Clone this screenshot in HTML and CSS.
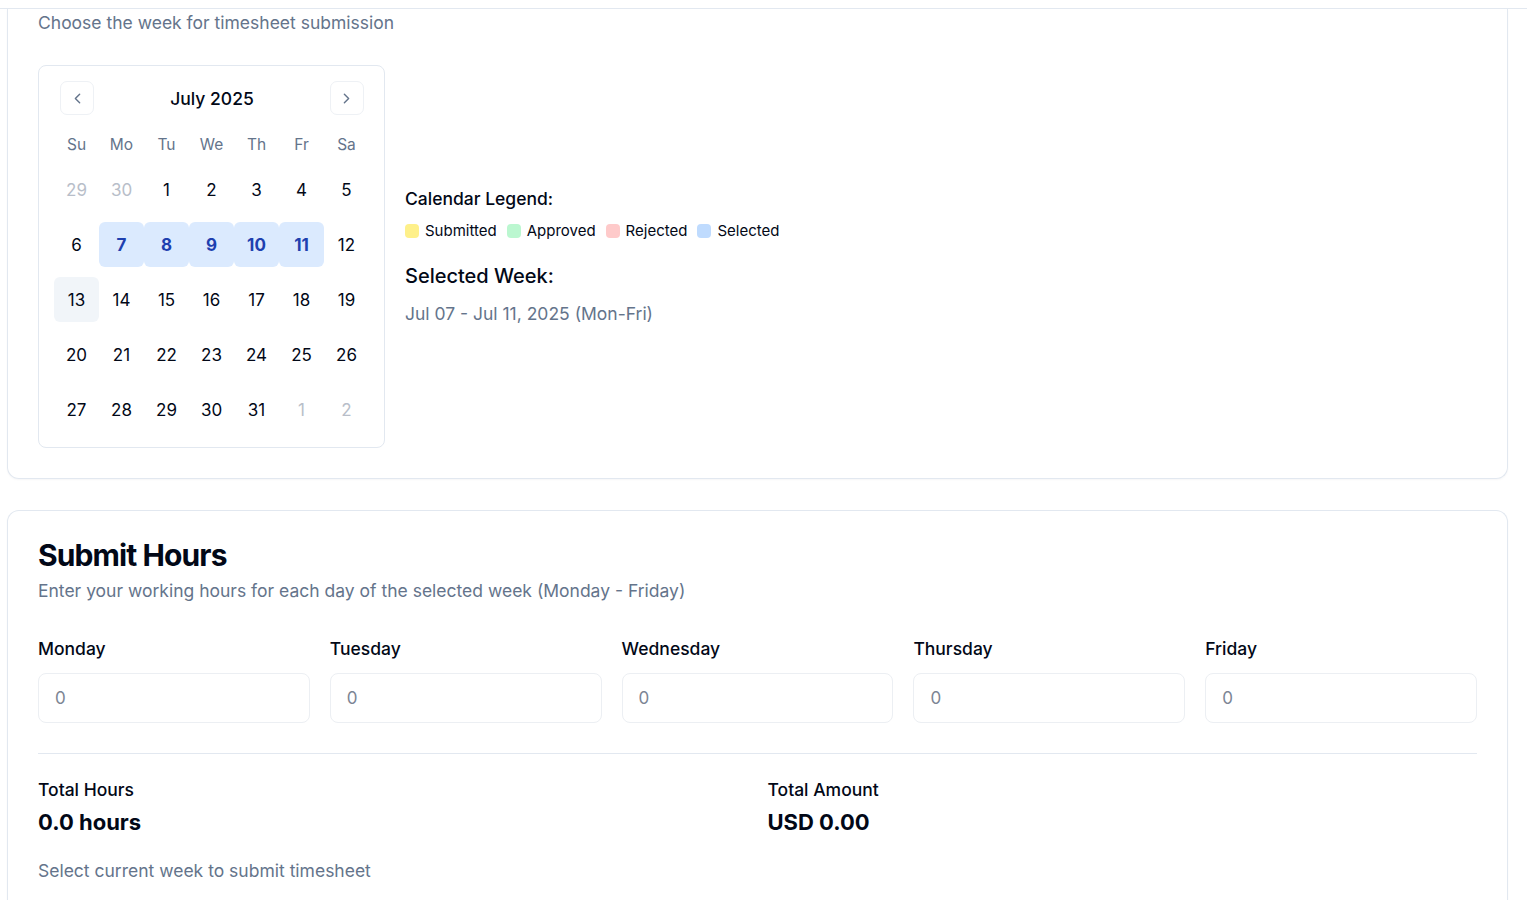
FILE: index.html
```html
<!DOCTYPE html>
<html>
<head>
<meta charset="utf-8">
<link rel="stylesheet" href="styles.css">
</head>
<body>
<div class="topbar"></div>
<main class="page">
  <section class="card card-week">
    <p class="muted lead">Choose the week for timesheet submission</p>
    <div class="week-row">
      <div class="calendar">
        <div class="cal-head">
          <button class="nav-btn" aria-label="Previous month">
            <svg width="17" height="17" viewBox="0 0 24 24" fill="none" stroke="currentColor" stroke-width="2" stroke-linecap="round" stroke-linejoin="round"><path d="m15 18-6-6 6-6"/></svg>
          </button>
          <div class="cal-title">July 2025</div>
          <button class="nav-btn" aria-label="Next month">
            <svg width="17" height="17" viewBox="0 0 24 24" fill="none" stroke="currentColor" stroke-width="2" stroke-linecap="round" stroke-linejoin="round"><path d="m9 18 6-6-6-6"/></svg>
          </button>
        </div>
        <div class="cal-weekdays">
          <span>Su</span><span>Mo</span><span>Tu</span><span>We</span><span>Th</span><span>Fr</span><span>Sa</span>
        </div>
        <div class="cal-grid">
          <span class="day outside">29</span><span class="day outside">30</span><span class="day">1</span><span class="day">2</span><span class="day">3</span><span class="day">4</span><span class="day">5</span>
          <span class="day">6</span><span class="day sel">7</span><span class="day sel">8</span><span class="day sel">9</span><span class="day sel">10</span><span class="day sel">11</span><span class="day">12</span>
          <span class="day today">13</span><span class="day">14</span><span class="day">15</span><span class="day">16</span><span class="day">17</span><span class="day">18</span><span class="day">19</span>
          <span class="day">20</span><span class="day">21</span><span class="day">22</span><span class="day">23</span><span class="day">24</span><span class="day">25</span><span class="day">26</span>
          <span class="day">27</span><span class="day">28</span><span class="day">29</span><span class="day">30</span><span class="day">31</span><span class="day outside">1</span><span class="day outside">2</span>
        </div>
      </div>
      <div class="week-info">
        <h3 class="legend-title">Calendar Legend:</h3>
        <div class="legend">
          <span class="legend-item"><i class="sw sw-yellow"></i>Submitted</span>
          <span class="legend-item"><i class="sw sw-green"></i>Approved</span>
          <span class="legend-item"><i class="sw sw-red"></i>Rejected</span>
          <span class="legend-item"><i class="sw sw-blue"></i>Selected</span>
        </div>
        <h3 class="sel-title">Selected Week:</h3>
        <p class="muted sel-range">Jul 07 - Jul 11, 2025 (Mon-Fri)</p>
      </div>
    </div>
  </section>

  <section class="card card-hours">
    <h2 class="hours-title">Submit Hours</h2>
    <p class="muted hours-sub">Enter your working hours for each day of the selected week (Monday - Friday)</p>
    <div class="days">
      <label class="field"><span class="field-label">Monday</span><input class="field-input" placeholder="0"></label>
      <label class="field"><span class="field-label">Tuesday</span><input class="field-input" placeholder="0"></label>
      <label class="field"><span class="field-label">Wednesday</span><input class="field-input" placeholder="0"></label>
      <label class="field"><span class="field-label">Thursday</span><input class="field-input" placeholder="0"></label>
      <label class="field"><span class="field-label">Friday</span><input class="field-input" placeholder="0"></label>
    </div>
    <div class="totals">
      <div class="total">
        <div class="total-label">Total Hours</div>
        <div class="total-value">0.0 hours</div>
      </div>
      <div class="total">
        <div class="total-label">Total Amount</div>
        <div class="total-value">USD 0.00</div>
      </div>
    </div>
    <p class="muted note">Select current week to submit timesheet</p>
  </section>
</main>
</body>
</html>
```

FILE: styles.css
```css
* { box-sizing: border-box; }
html, body { margin: 0; padding: 0; background: #fff; }
body {
  font-family: Inter, "Noto Sans", sans-serif;
  color: #020817;
  height: 900px;
  overflow: hidden;
}
.topbar {
  height: 9px;
  border-bottom: 1px solid #e2e8f0;
}
.page {
  padding: 0 19px 0 7px;
  display: flex;
  flex-direction: column;
  gap: 31px;
}
.card {
  border: 1px solid #e2e8f0;
  border-radius: 12px;
  background: #fff;
  padding: 30px;
  box-shadow: 0 1px 2px rgba(15, 23, 42, 0.04);
}
.card-week {
  border-top: none;
  border-radius: 0 0 12px 12px;
  padding-top: 2px;
}
.muted { color: #64748b; margin: 0; }
.lead { font-size: 17.5px; line-height: 24px; }

.week-row {
  margin-top: 30px;
  display: flex;
  align-items: center;
  gap: 20px;
}
.calendar {
  border: 1px solid #e2e8f0;
  border-radius: 8px;
  padding: 15px;
  width: 347px;
  flex-shrink: 0;
}
.cal-head {
  display: flex;
  align-items: center;
  justify-content: space-between;
  padding: 0 5px 0 6px;
}
.nav-btn {
  width: 34px;
  height: 34px;
  display: flex;
  align-items: center;
  justify-content: center;
  border: 1px solid #eef1f5;
  border-radius: 7px;
  background: #fff;
  color: #64748b;
  padding: 0;
}
.cal-title { font-size: 17.5px; font-weight: 500; padding-top: 1px; }
.cal-weekdays {
  display: grid;
  grid-template-columns: repeat(7, 45px);
  margin-top: 17px;
  height: 24px;
  align-items: center;
}
.cal-weekdays span {
  text-align: center;
  font-size: 15.5px;
  color: #64748b;
}
.cal-grid {
  margin-top: 11px;
  display: grid;
  grid-template-columns: repeat(7, 45px);
  grid-auto-rows: 45px;
  row-gap: 10px;
}
.day {
  display: flex;
  align-items: center;
  justify-content: center;
  font-size: 17px;
  border-radius: 6px;
  color: #020817;
}
.day.outside { color: #b8bec9; }
.day.sel { background: #dbeafe; color: #1e40af; font-weight: 700; }
.day.today { background: #f1f5f9; }

.week-info { display: flex; flex-direction: column; }
.legend-title { margin: 0; font-size: 17.5px; font-weight: 500; line-height: 24px; }
.legend {
  display: flex;
  gap: 10px;
  margin-top: 10px;
  font-size: 15px;
}
.legend-item { display: flex; align-items: center; gap: 6px; }
.sw { width: 14px; height: 14px; border-radius: 4px; display: inline-block; }
.sw-yellow { background: #fef08a; }
.sw-green { background: #bbf7d0; }
.sw-red { background: #fecaca; }
.sw-blue { background: #bfdbfe; }
.sel-title { margin: 22px 0 0; font-size: 20px; font-weight: 500; line-height: 28px; }
.sel-range { margin-top: 12px; font-size: 17.5px; line-height: 24px; }

.card-hours { padding-top: 26px; border-bottom: none; border-radius: 12px 12px 0 0; }
.hours-title { margin: 0; font-size: 30px; font-weight: 700; line-height: 36px; letter-spacing: -0.9px; }
.hours-sub { margin-top: 6px; font-size: 17.5px; line-height: 24px; }
.days {
  margin-top: 34px;
  display: grid;
  grid-template-columns: repeat(5, minmax(0, 1fr));
  gap: 20px;
  padding-bottom: 30px;
  border-bottom: 1px solid #e2e8f0;
}
.field { display: flex; flex-direction: column; gap: 12px; min-width: 0; }
.field-label { font-size: 17.5px; font-weight: 500; line-height: 24px; }
.field-input {
  width: 100%;
  height: 50px;
  border: 1px solid #eceff3;
  border-radius: 8px;
  padding: 0 16px;
  font-family: inherit;
  font-size: 17px;
  color: #020817;
  background: #fff;
  outline: none;
}
.field-input::placeholder { color: #7c8594; }
.totals {
  margin-top: 24px;
  display: grid;
  grid-template-columns: 1fr 1fr;
  gap: 20px;
}
.total-label { font-size: 17.5px; font-weight: 500; line-height: 24px; }
.total-value { margin-top: 5px; font-size: 22px; font-weight: 700; line-height: 30px; }
.note { margin-top: 22px; font-size: 17.5px; line-height: 24px; }
```
